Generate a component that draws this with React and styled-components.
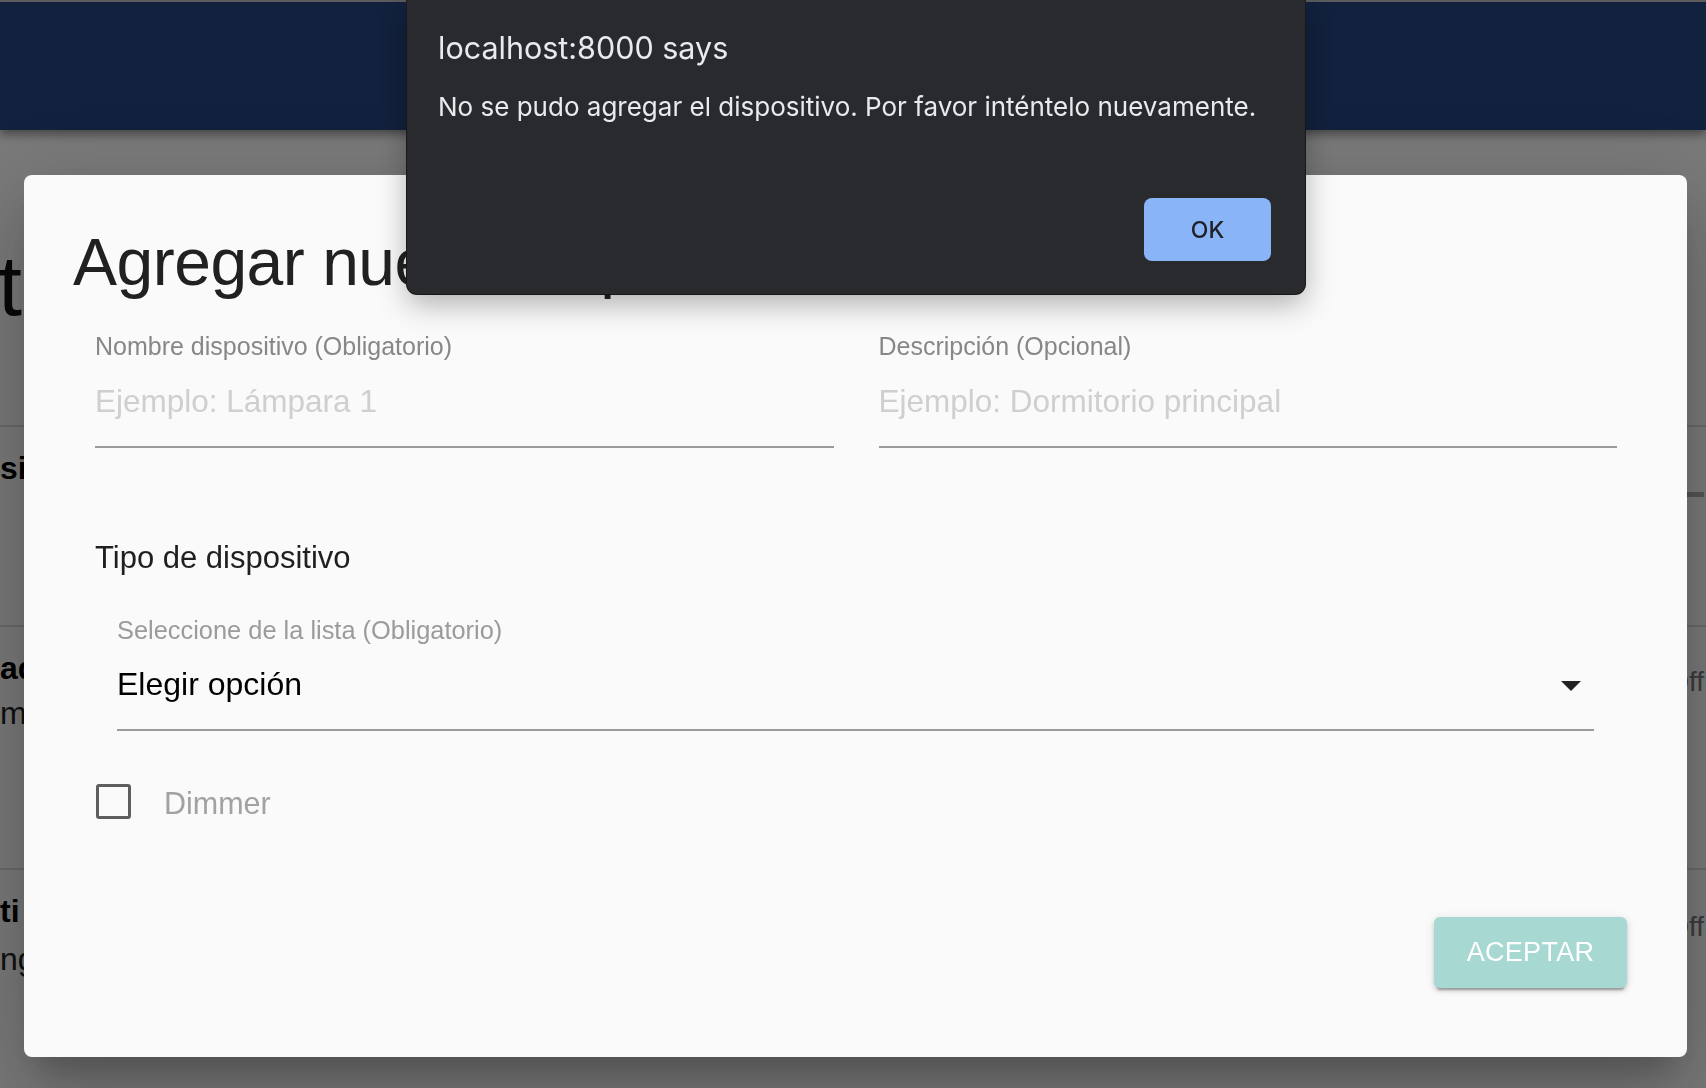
import React from 'react';
import styled, { createGlobalStyle } from 'styled-components';

const GlobalStyle = createGlobalStyle`
  html, body {
    margin: 0;
    padding: 0;
  }
  body {
    width: 1706px;
    height: 1088px;
    overflow: hidden;
    background: #f5f5f5;
    font-family: "Liberation Sans", Arial, sans-serif;
  }
`;

/* page underneath the modal */

const Page = styled.div`
  height: 1088px;
  display: flex;
  flex-direction: column;
  background: #f5f5f5;
  overflow: hidden;
`;

const AppBar = styled.header`
  flex: 0 0 128px;
  border-top: 2px solid #b6b6b6;
  background: #24427c;
  box-shadow: 0 4px 10px rgba(0, 0, 0, 0.45);
  position: relative;
`;

const PageTitle = styled.h1`
  margin: 0 0 0 -2px;
  height: 295px;
  box-sizing: border-box;
  padding-top: 105px;
  font-size: 86px;
  line-height: 100px;
  font-weight: 400;
  color: #111;
  white-space: nowrap;
`;

const DeviceRow = styled.div`
  height: ${(p) => p.$height}px;
  box-sizing: border-box;
  border-top: 2px solid #d6d6d6;
  display: flex;
  justify-content: space-between;
`;

const RowText = styled.div`
  padding-top: ${(p) => p.$top}px;
  display: flex;
  flex-direction: column;
  gap: ${(p) => p.$gap || 0}px;
`;

const DeviceName = styled.span`
  font-size: 32px;
  line-height: 32px;
  font-weight: 700;
  color: #000;
  white-space: nowrap;
`;

const DeviceDesc = styled.span`
  font-size: 32px;
  line-height: 32px;
  color: #222;
  white-space: nowrap;
`;

const RowSide = styled.div`
  padding-top: ${(p) => p.$top}px;
  padding-right: 2px;
`;

const StateText = styled.span`
  display: block;
  font-size: 28px;
  line-height: 32px;
  color: #767676;
`;

const Track = styled.div`
  width: 220px;
  height: 5px;
  background: #aaaaaa;
`;

/* modal */

const Backdrop = styled.div`
  position: fixed;
  inset: 0;
  z-index: 10;
  box-sizing: border-box;
  padding: 175px 19px 0 24px;
  background: rgba(0, 0, 0, 0.5);
`;

const DialogCard = styled.div`
  height: 882px;
  box-sizing: border-box;
  padding: 47px 60px 69px 49px;
  background: #fafafa;
  border-radius: 8px;
  display: flex;
  flex-direction: column;
  box-shadow: 0 22px 30px -14px rgba(0, 0, 0, 0.2),
    0 48px 76px 6px rgba(0, 0, 0, 0.14), 0 18px 92px 16px rgba(0, 0, 0, 0.12);
`;

const DialogTitle = styled.h2`
  margin: 0;
  font-size: 66px;
  line-height: 80px;
  font-weight: 400;
  letter-spacing: -0.5px;
  color: #212121;
  white-space: nowrap;
`;

const FieldsRow = styled.div`
  margin: 29px 10px 0 22px;
  display: grid;
  grid-template-columns: 1fr 1fr;
  column-gap: 45px;
`;

const Field = styled.div`
  display: flex;
  flex-direction: column;
`;

const FieldLabel = styled.label`
  font-size: ${(p) => p.$size || 25}px;
  line-height: 30px;
  color: ${(p) => p.$muted ? '#9b9b9b' : '#878787'};
  white-space: nowrap;
`;

const InputLine = styled.div`
  margin-top: ${(p) => p.$gap}px;
  padding-bottom: 25px;
  border-bottom: 2px solid #9a9a9a;
  display: flex;
  align-items: center;
  justify-content: space-between;
  font-size: ${(p) => p.$size || 31.5}px;
  line-height: 40px;
  color: ${(p) => p.$placeholder ? '#cfcfcf' : '#000'};
  white-space: nowrap;
`;

const SectionTitle = styled.div`
  margin: 90px 0 0 22px;
  font-size: 31px;
  line-height: 40px;
  color: #1f1f1f;
`;

const SelectField = styled(Field)`
  margin: 37px 33px 0 44px;
`;

const Arrow = styled.svg`
  width: 20px;
  height: 10px;
  margin: 4px 13px 0 0;
  fill: #222;
`;

const CheckRow = styled.div`
  margin: 50px 0 0 23px;
  height: 40px;
  display: flex;
  align-items: center;
  gap: 33px;
`;

const CheckBox = styled.span`
  width: 35px;
  height: 35px;
  box-sizing: border-box;
  border: 3px solid #5e5e5e;
  border-radius: 3px;
`;

const CheckLabel = styled.span`
  font-size: 30.5px;
  line-height: 40px;
  padding-top: 3px;
  color: #a2a2a2;
`;

const DialogActions = styled.div`
  margin-top: auto;
  display: flex;
  justify-content: flex-end;
`;

const AcceptButton = styled.button`
  width: 193px;
  height: 71px;
  border: 0;
  border-radius: 6px;
  background: #a7d8d2;
  color: #fff;
  font-family: "Liberation Sans", Arial, sans-serif;
  font-size: 27px;
  letter-spacing: 0.3px;
  box-shadow: 0 5px 2px -3px rgba(0, 0, 0, 0.25), 0 3px 4px rgba(0, 0, 0, 0.14),
    0 1px 10px rgba(0, 0, 0, 0.1);
`;

/* browser alert */

const AlertBox = styled.div`
  position: fixed;
  top: 0;
  left: 407px;
  z-index: 20;
  width: 898px;
  height: 294px;
  box-sizing: border-box;
  padding: 29px 34px 33px 31px;
  display: flex;
  flex-direction: column;
  background: #292a2d;
  border-radius: 0 0 10px 10px;
  box-shadow: 0 10px 30px rgba(0, 0, 0, 0.3), 0 0 0 1px #1d1d1f;
  font-family: Inter, "Liberation Sans", sans-serif;
  color: #e8eaed;
`;

const AlertTitle = styled.div`
  font-size: 30.5px;
  line-height: 38px;
`;

const AlertMessage = styled.div`
  margin-top: 23px;
  font-size: 26px;
  line-height: 34px;
  white-space: nowrap;
`;

const AlertActions = styled.div`
  margin-top: auto;
  display: flex;
  justify-content: flex-end;
`;

const OkButton = styled.button`
  width: 127px;
  height: 63px;
  border: 0;
  border-radius: 8px;
  background: #8ab4f8;
  color: #202124;
  font-family: Inter, "Liberation Sans", sans-serif;
  font-size: 23px;
  font-weight: 500;
`;

export default function App() {
  return (
    <>
      <GlobalStyle />
      <Page>
        <AppBar />
        <PageTitle>tus dispositivos</PageTitle>
        <DeviceRow $height={200}>
          <RowText $top={25}>
            <DeviceName>sia</DeviceName>
          </RowText>
          <RowSide $top={65}>
            <Track />
          </RowSide>
        </DeviceRow>
        <DeviceRow $height={243}>
          <RowText $top={25} $gap={13}>
            <DeviceName>ad</DeviceName>
            <DeviceDesc>mi</DeviceDesc>
          </RowText>
          <RowSide $top={39}>
            <StateText>Off</StateText>
          </RowSide>
        </DeviceRow>
        <DeviceRow $height={220}>
          <RowText $top={25} $gap={16}>
            <DeviceName>ti</DeviceName>
            <DeviceDesc>ng</DeviceDesc>
          </RowText>
          <RowSide $top={41}>
            <StateText>Off</StateText>
          </RowSide>
        </DeviceRow>
      </Page>

      <Backdrop>
        <DialogCard>
          <DialogTitle>Agregar nuevo dispositivo</DialogTitle>
          <FieldsRow>
            <Field>
              <FieldLabel>Nombre dispositivo (Obligatorio)</FieldLabel>
              <InputLine $gap={20} $placeholder>Ejemplo: Lámpara 1</InputLine>
            </Field>
            <Field>
              <FieldLabel>Descripción (Opcional)</FieldLabel>
              <InputLine $gap={20} $placeholder>Ejemplo: Dormitorio principal</InputLine>
            </Field>
          </FieldsRow>
          <SectionTitle>Tipo de dispositivo</SectionTitle>
          <SelectField>
            <FieldLabel $muted $size={25.4}>Seleccione de la lista (Obligatorio)</FieldLabel>
            <InputLine $gap={19} $size={32}>
              Elegir opción
              <Arrow viewBox="0 0 20 10">
                <path d="M0 0 L10 10 L20 0 Z" />
              </Arrow>
            </InputLine>
          </SelectField>
          <CheckRow>
            <CheckBox />
            <CheckLabel>Dimmer</CheckLabel>
          </CheckRow>
          <DialogActions>
            <AcceptButton>ACEPTAR</AcceptButton>
          </DialogActions>
        </DialogCard>
      </Backdrop>

      <AlertBox>
        <AlertTitle>localhost:8000 says</AlertTitle>
        <AlertMessage>No se pudo agregar el dispositivo. Por favor inténtelo nuevamente.</AlertMessage>
        <AlertActions>
          <OkButton>OK</OkButton>
        </AlertActions>
      </AlertBox>
    </>
  );
}
